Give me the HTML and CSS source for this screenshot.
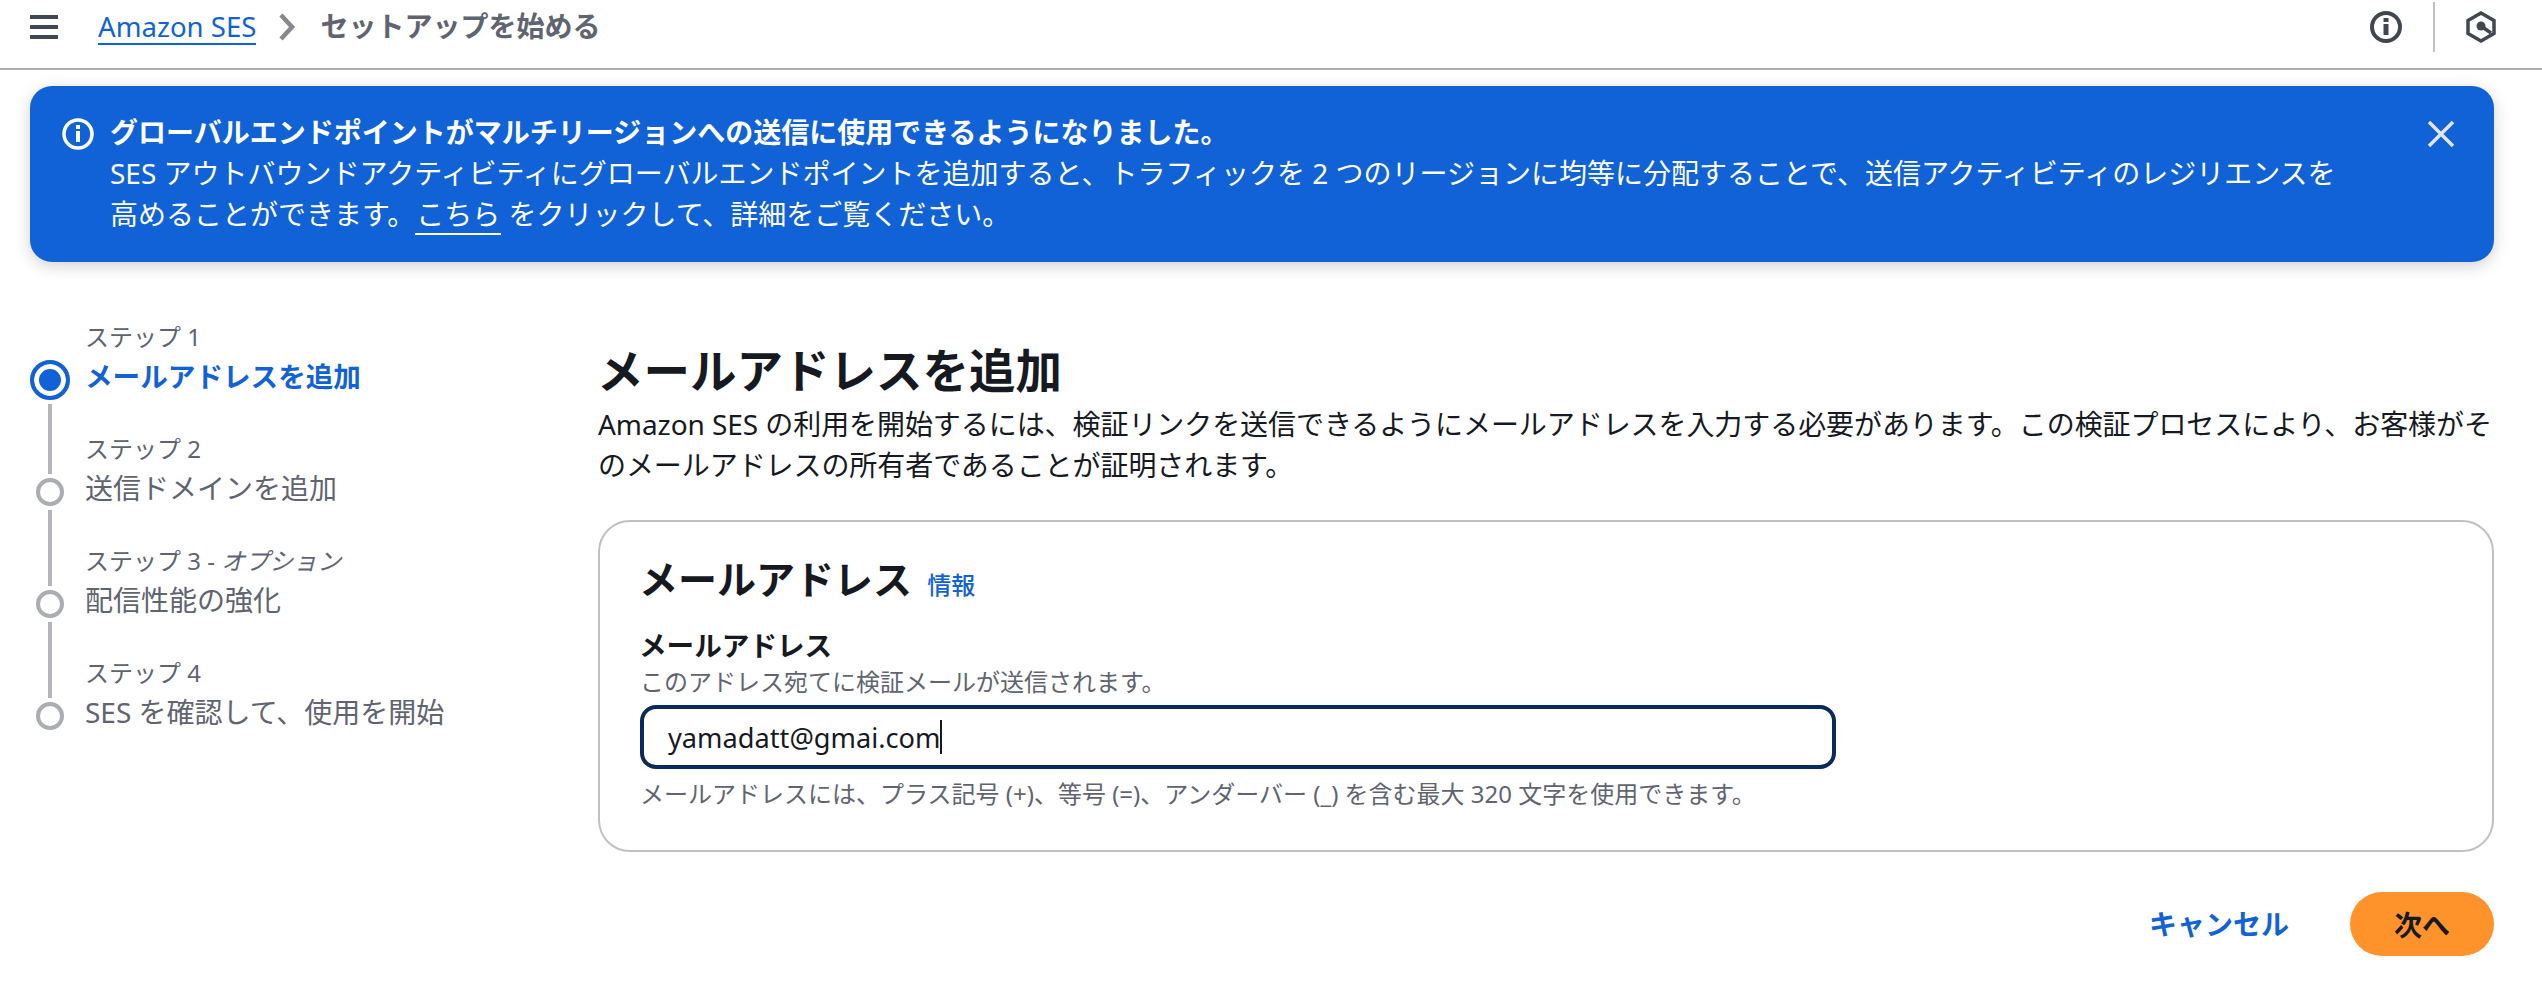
FILE: index.html
```html
<!DOCTYPE html>
<html lang="ja">
<head>
    <meta charset="UTF-8">
    <title>Amazon SES セットアップを始める</title>
    <link rel="stylesheet" href="styles.css">
</head>
<body>

<!-- Top bar -->
<header class="topbar">
    <svg class="menu-icon" width="28" height="24" viewBox="0 0 28 24"><path d="M0 2h28M0 12h28M0 22h28" stroke="#414750" stroke-width="4"/></svg>
    <a class="crumb-link" href="#">Amazon SES</a>
    <svg class="crumb-sep" width="18" height="28" viewBox="0 0 18 28"><path d="M3 2l11 12L3 26" fill="none" stroke="#85888f" stroke-width="4.500"/></svg>
    <span class="crumb-current">セットアップを始める</span>
    <div class="topbar-right">
        <svg width="32" height="32" viewBox="0 0 32 32"><circle cx="16" cy="16" r="14" fill="none" stroke="#414750" stroke-width="4"/><path d="M16 13v11" stroke="#414750" stroke-width="5"/><path d="M16 7v4" stroke="#414750" stroke-width="5"/></svg>
        <span class="topbar-divider"></span>
        <svg width="30" height="32" viewBox="0 0 30 32"><path d="M15 2l13 7.500v13L15 30 2 22.500v-13z" fill="none" stroke="#414750" stroke-width="3.500"/><circle cx="15" cy="15" r="4.500" fill="#414750"/><path d="M15 15l10 7" stroke="#414750" stroke-width="3.500"/></svg>
    </div>
</header>

<!-- Flash banner -->
<div class="flash">
    <svg class="flash-icon" width="32" height="32" viewBox="0 0 32 32"><circle cx="16" cy="16" r="14" fill="none" stroke="#fff" stroke-width="3.500"/><path d="M16 13v11M16 7v4" stroke="#fff" stroke-width="4"/></svg>
    <div class="flash-body">
        <div class="flash-title">グローバルエンドポイントがマルチリージョンへの送信に使用できるようになりました。</div>
        <div>SES アウトバウンドアクティビティにグローバルエンドポイントを追加すると、トラフィックを 2 つのリージョンに均等に分配することで、送信アクティビティのレジリエンスを<br>高めることができます。<a href="#">こちら</a> をクリックして、詳細をご覧ください。</div>
    </div>
    <svg class="flash-close" width="28" height="28" viewBox="0 0 28 28"><path d="M2 2l24 24M26 2L2 26" stroke="#e3e5e8" stroke-width="3.500"/></svg>
</div>

<div class="layout">
    <!-- Wizard steps -->
    <ol class="steps">
        <li class="step active">
            <div class="rail"><span class="dot"></span></div>
            <div class="step-text"><small>ステップ 1</small><span>メールアドレスを追加</span></div>
        </li>
        <li class="step">
            <div class="rail"><span class="line"></span><span class="dot"></span></div>
            <div class="step-text"><small>ステップ 2</small><span>送信ドメインを追加</span></div>
        </li>
        <li class="step">
            <div class="rail"><span class="line"></span><span class="dot"></span></div>
            <div class="step-text"><small>ステップ 3 - <i>オプション</i></small><span>配信性能の強化</span></div>
        </li>
        <li class="step">
            <div class="rail"><span class="line"></span><span class="dot"></span></div>
            <div class="step-text"><small>ステップ 4</small><span>SES を確認して、使用を開始</span></div>
        </li>
    </ol>

    <!-- Main form -->
    <main class="content">
        <h1>メールアドレスを追加</h1>
        <p class="lead">Amazon SES の利用を開始するには、検証リンクを送信できるようにメールアドレスを入力する必要があります。この検証プロセスにより、お客様がそのメールアドレスの所有者であることが証明されます。</p>

        <section class="card">
            <h2>メールアドレス <a href="#">情報</a></h2>
            <div class="field-label">メールアドレス</div>
            <div class="field-hint">このアドレス宛てに検証メールが送信されます。</div>
            <div class="input"><span>yamadatt@gmai.com</span><span class="caret"></span></div>
            <div class="field-hint">メールアドレスには、プラス記号 (+)、等号 (=)、アンダーバー (_) を含む最大 320 文字を使用できます。</div>
        </section>

        <div class="actions">
            <a class="cancel" href="#">キャンセル</a>
            <button type="button" class="next">次へ</button>
        </div>
    </main>
</div>

</body>
</html>
```

FILE: styles.css
```css
* {
    box-sizing: border-box;
}

body {
    margin: 0;
    background-color: #fff;
    color: #16191f;
    font-family: "Noto Sans", "Noto Sans CJK JP", sans-serif;
    font-size: 28px;
    line-height: 41px;
}

a {
    color: #1162d6;
    text-decoration: none;
}

.topbar {
    display: flex;
    align-items: center;
    height: 70px;
    padding: 0 46px 14px 30px;
    border-bottom: 2px solid #abadb3;
}

.menu-icon {
    margin-right: 40px;
}

.crumb-link {
    border-bottom: 2px solid #1162d6;
    font-size: 27.6px;
    line-height: 34px;
}

.crumb-sep {
    margin: 0 24px 0 22px;
}

.crumb-current {
    margin-bottom: 2px;
    color: #5f6470;
    font-weight: 700;
}

.topbar-right {
    display: flex;
    align-items: center;
    margin-left: auto;
}

.topbar-divider {
    width: 2px;
    height: 50px;
    margin: 0 31px;
    background-color: #c0c1c5;
}

.flash {
    display: flex;
    height: 176px;
    margin: 16px 48px 0 30px;
    padding: 26px 39px 0 32px;
    background-color: #1162d6;
    border-radius: 22px;
    box-shadow: 0 4px 16px rgba(0, 7, 22, 0.18);
    color: #fff;
}

.flash a {
    color: #fff;
    border-bottom: 2px solid #fff;
    padding: 0 1px;
}

.flash-icon {
    flex: none;
    margin: 6px 16px 0 0;
}

.flash-body {
    flex: 1;
}

.flash-title {
    font-weight: 700;
}

.flash-close {
    flex: none;
    margin-top: 8px;
}

.layout {
    display: flex;
    margin-top: 54px;
    padding: 0 48px 0 30px;
}

.steps {
    flex: none;
    width: 568px;
    margin: 0;
    padding: 0;
    list-style: none;
    color: #5f6470;
}

.step {
    display: flex;
    height: 112px;
}

.step.active {
    height: 84px;
}

.step.active + .step {
    height: 106px;
}

.rail {
    display: flex;
    flex-direction: column;
    align-items: center;
    justify-content: flex-end;
    width: 40px;
    margin-right: 15px;
}

.line {
    flex: 1;
    width: 4px;
    margin: 4px 0;
    background-color: #b4b6bc;
}

.dot {
    flex: none;
    width: 28px;
    height: 28px;
    background-color: #fff;
    border: 4px solid #abadb3;
    border-radius: 50%;
}

.active .dot {
    width: 40px;
    height: 40px;
    background-color: #1162d6;
    border: 4px solid #1162d6;
    box-shadow: inset 0 0 0 5px #fff;
}

.step-text {
    display: flex;
    flex-direction: column;
    justify-content: flex-end;
}

.active .step-text {
    padding-bottom: 6px;
}

.step-text small {
    margin-bottom: 3px;
    font-size: 24px;
    line-height: 36px;
}

.step-text span {
    line-height: 36px;
}

.active .step-text span {
    color: #1162d6;
    font-size: 27.6px;
    font-weight: 700;
}

.content {
    flex: 1;
    min-width: 0;
}

h1 {
    margin: 0;
    padding-top: 22px;
    margin-left: -1px;
    font-size: 46.5px;
    line-height: 64px;
    font-weight: 700;
}

.lead {
    margin: 2px 0 0;
    letter-spacing: -0.07px;
}

.card {
    height: 332px;
    margin-top: 34px;
    padding: 27px 40px 0;
    border: 2px solid #c0c1c5;
    border-radius: 32px;
}

h2 {
    margin: 0 0 0 -1px;
    font-size: 39px;
    line-height: 60px;
    font-weight: 700;
}

h2 a {
    margin-left: 5px;
    font-size: 24px;
    font-weight: 500;
}

.field-label {
    margin: 10px 0 0 -1px;
    font-size: 27.6px;
    font-weight: 700;
    line-height: 40px;
}

.field-hint {
    color: #5f6470;
    font-size: 24px;
    line-height: 34px;
}

.input {
    display: flex;
    align-items: center;
    width: 1196px;
    height: 64px;
    margin: 6px 0 8px;
    padding: 0 24px;
    border: 4px solid #0a2a5c;
    border-radius: 16px;
    font-size: 27.2px;
}

.caret {
    width: 2px;
    height: 34px;
    background-color: #16191f;
}

.actions {
    display: flex;
    align-items: center;
    justify-content: flex-end;
    margin-top: 40px;
}

.cancel {
    margin-right: 61px;
    font-weight: 700;
}

.next {
    width: 144px;
    height: 64px;
    border: none;
    border-radius: 32px;
    background-color: #ff932b;
    color: #16191f;
    font: 700 28px "Noto Sans", "Noto Sans CJK JP", sans-serif;
}
```
